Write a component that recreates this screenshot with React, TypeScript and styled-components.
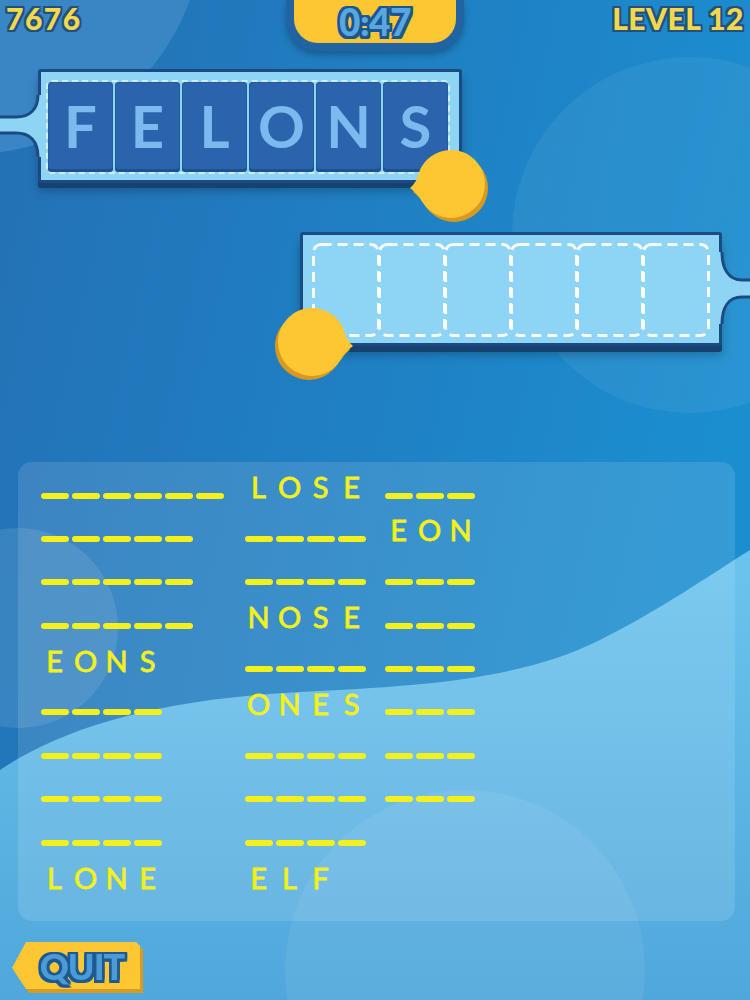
import React from 'react';
import styled, { createGlobalStyle } from 'styled-components';

const outline = (c: string, w: number) =>
  [
    `${w}px 0 0 ${c}`,
    `-${w}px 0 0 ${c}`,
    `0 ${w}px 0 ${c}`,
    `0 -${w}px 0 ${c}`,
    `${w}px ${w}px 0 ${c}`,
    `-${w}px ${w}px 0 ${c}`,
    `${w}px -${w}px 0 ${c}`,
    `-${w}px -${w}px 0 ${c}`,
  ].join(', ');

const GlobalStyle = createGlobalStyle`
  body {
    margin: 0;
    background: #1f7ec3;
  }
  * {
    box-sizing: border-box;
  }
`;

const Page = styled.div`
  position: relative;
  width: 750px;
  height: 1000px;
  overflow: hidden;
  font-family: Lato, 'DejaVu Sans', sans-serif;
`;

const Backdrop = styled.svg`
  position: absolute;
  inset: 0;
`;

const Content = styled.div`
  position: relative;
  display: flex;
  flex-direction: column;
`;

const Header = styled.div`
  display: grid;
  grid-template-columns: 1fr auto 1fr;
  align-items: start;
  height: 52px;
`;

const Stat = styled.div<{ $align: 'left' | 'right' }>`
  padding: 3px 6px 0;
  text-align: ${(p) => p.$align};
  font-size: 30px;
  line-height: 30px;
  font-weight: 900;
  letter-spacing: ${(p) => (p.$align === 'left' ? '1.5px' : '0.5px')};
  color: #f4d84b;
  text-shadow: ${outline('#22517f', 2)};
`;

const TimerPill = styled.div`
  width: 178px;
  height: 51px;
  border: 8px solid #2163a3;
  border-top: 0;
  border-radius: 0 0 32px 32px;
  background: #fdc733;
  display: flex;
  align-items: flex-start;
  justify-content: center;
  padding-top: 4px;
  box-shadow: 0 4px 6px rgba(0, 0, 0, 0.25);
`;

const TimerText = styled.span`
  display: block;
  font-size: 37px;
  line-height: 36px;
  font-weight: 900;
  letter-spacing: -0.5px;
  color: #5aa6de;
  text-shadow: ${outline('#1b5690', 2.5)};
`;

const TrayRow = styled.div<{ $indent: number; $gap: number }>`
  margin-top: ${(p) => p.$gap}px;
  padding-left: ${(p) => p.$indent}px;
`;

const Tray = styled.div<{ $width: number; $pad: string; $shadow: number }>`
  position: relative;
  width: ${(p) => p.$width}px;
  padding: ${(p) => p.$pad};
  background: #8ed4f4;
  border: 3px solid #1b4b82;
  border-radius: 3px;
  box-shadow: 0 ${(p) => p.$shadow}px 0 #17416f, 0 ${(p) => p.$shadow + 3}px 10px rgba(0, 0, 0, 0.25);
`;

const TileStrip = styled.div`
  display: flex;
  gap: 2px;
  outline: 2px dashed rgba(255, 255, 255, 0.6);
  border-radius: 4px;
`;

const Tile = styled.div`
  width: 65px;
  height: 90px;
  display: flex;
  align-items: center;
  justify-content: center;
  padding-bottom: 4px;
  background: #2b64ad;
  border-radius: 4px;
  box-shadow: inset 0 -3px 0 #1e5192, inset 0 0 0 1px #245aa0;
  font-size: 58px;
  font-weight: 700;
  color: #7cb9ef;
`;

const SlotStrip = styled.div`
  display: flex;
  height: 94px;
`;

const Slot = styled.svg`
  flex: none;

  & + & {
    margin-left: -2px;
  }
`;

const Handle = styled.svg<{ $side: 'left' | 'right'; $offset: number; $top: number }>`
  position: absolute;
  top: ${(p) => p.$top}px;
  ${(p) => p.$side}: ${(p) => p.$offset}px;
  overflow: visible;
`;

const Knob = styled.svg<{ $left: number; $top: number; $flip?: boolean }>`
  position: absolute;
  left: ${(p) => p.$left}px;
  top: ${(p) => p.$top}px;
  transform: ${(p) => (p.$flip ? 'scaleX(-1)' : 'none')};
  z-index: 2;
`;

const WordPanel = styled.div`
  margin: 116px 0 0 18px;
  width: 717px;
  height: 459px;
  padding: 10px 0 0 21px;
  background: rgba(255, 255, 255, 0.12);
  border-radius: 14px;
  display: grid;
  grid-template-columns: 204px 140px auto;
  grid-auto-rows: 43.4px;
`;

const Word = styled.div`
  display: flex;
  align-items: flex-start;
`;

const Cell = styled.span`
  display: flex;
  justify-content: center;
  width: 31px;
  height: 29px;
  font-size: 29px;
  line-height: 29px;
  font-weight: 400;
  color: #f4f01c;
  -webkit-text-stroke: 0.8px #f4f01c;
`;

const Dash = styled.span`
  width: 28px;
  height: 6px;
  margin-top: 20.5px;
  border-radius: 3px;
  background: #f4f01c;
`;

const QuitButton = styled.button`
  margin: 21px 0 0 12px;
  width: 128px;
  height: 47px;
  padding: 0;
  border: 0;
  background: transparent;
  filter: drop-shadow(3px 4px 0 #d69b1f);
  cursor: pointer;
`;

const TagFace = styled.div`
  width: 100%;
  height: 100%;
  display: flex;
  align-items: center;
  justify-content: center;
  padding-left: 12px;
  background: #fdc733;
  clip-path: polygon(14px 0, calc(100% - 4px) 0, 100% 4px, 100% 100%, 14px 100%, 0 55%);
  font-family: Lato, 'DejaVu Sans', sans-serif;
  font-size: 36px;
  font-weight: 900;
  letter-spacing: -1px;
  color: #4b9bd6;
  text-shadow: ${outline('#1d5993', 2.5)};
`;

type Entry = string | number | null;

const rows: Entry[][] = [
  [6, 'LOSE', 3],
  [5, 4, 'EON'],
  [5, 4, 3],
  [5, 'NOSE', 3],
  ['EONS', 4, 3],
  [4, 'ONES', 3],
  [4, 4, 3],
  [4, 4, 3],
  [4, 4, null],
  ['LONE', 'ELF', null],
];

const knobPath =
  'M3,40 Q10,34 12,24.4 A34,34 0 1 1 14.6,53 Q11,46 3,40 Z';

const KnobShape: React.FC<{ left: number; top: number; flip?: boolean }> = ({ left, top, flip }) => (
  <Knob $left={left} $top={top} $flip={flip} width="84" height="76" viewBox="0 0 84 76">
    <path d={knobPath} fill="#d9991f" transform="translate(3 4)" />
    <path d={knobPath} fill="#fdc733" />
  </Knob>
);

const WordCell: React.FC<{ entry: Entry }> = ({ entry }) => {
  if (entry === null) return <Word />;
  if (typeof entry === 'number') {
    return (
      <Word>
        {Array.from({ length: entry }).map((_, i) => (
          <Cell key={i}>
            <Dash />
          </Cell>
        ))}
      </Word>
    );
  }
  return (
    <Word>
      {entry.split('').map((ch, i) => (
        <Cell key={i}>{ch}</Cell>
      ))}
    </Word>
  );
};

export default function App() {
  return (
    <Page>
      <GlobalStyle />
      <Backdrop width="750" height="1000" viewBox="0 0 750 1000">
        <defs>
          <linearGradient id="base" x1="0" y1="0" x2="1" y2="0.3">
            <stop offset="0" stopColor="#2470b5" />
            <stop offset="1" stopColor="#1b8ecf" />
          </linearGradient>
          <linearGradient id="wave" x1="0" y1="0" x2="0" y2="1">
            <stop offset="0" stopColor="#6cc4ee" />
            <stop offset="1" stopColor="#4fa7db" />
          </linearGradient>
        </defs>
        <rect width="750" height="1000" fill="url(#base)" />
        <circle cx="-30" cy="-80" r="234" fill="#3a86c5" />
        <circle cx="690" cy="235" r="178" fill="#ffffff" opacity="0.06" />
        <circle cx="18" cy="628" r="100" fill="#ffffff" opacity="0.1" />
        <path
          d="M0,770 C60,730 150,700 300,692 C420,686 520,680 600,640 C660,610 710,575 750,550 L750,1000 L0,1000 Z"
          fill="url(#wave)"
        />
        <circle cx="465" cy="970" r="180" fill="#ffffff" opacity="0.07" />
      </Backdrop>

      <Content>
        <Header>
          <Stat $align="left">7676</Stat>
          <TimerPill>
            <TimerText>0:47</TimerText>
          </TimerPill>
          <Stat $align="right">LEVEL 12</Stat>
        </Header>

        <TrayRow $indent={38} $gap={17}>
          <Tray $width={424} $pad="10px 11px 8px 7px" $shadow={5}>
            <Handle $side="left" $offset={-41} $top={23} width="46" height="62" viewBox="0 0 46 62">
              <path
                d="M46,0 L38,0 C38,14 30,22 16,22 L0,22 L0,38 L16,38 C30,38 38,46 38,62 L46,62 Z"
                fill="#8ed4f4"
              />
              <path
                d="M38,0 C38,14 30,22 16,22 L0,22 M0,38 L16,38 C30,38 38,46 38,62"
                fill="none"
                stroke="#1b4b82"
                strokeWidth="3"
              />
            </Handle>
            <TileStrip>
              {'FELONS'.split('').map((ch, i) => (
                <Tile key={i}>{ch}</Tile>
              ))}
            </TileStrip>
            <KnobShape left={366} top={76} />
          </Tray>
        </TrayRow>

        <TrayRow $indent={300} $gap={49}>
          <Tray $width={422} $pad="8px 9px 6px 9px" $shadow={6}>
            <Handle $side="right" $offset={-31} $top={17} width="36" height="72" viewBox="0 0 36 72">
              <path
                d="M0,0 L8,0 C8,16 14,28 28,28 L36,28 L36,45 L28,45 C14,45 8,56 8,72 L0,72 Z"
                fill="#8ed4f4"
              />
              <path
                d="M8,0 C8,16 14,28 28,28 L36,28 M36,45 L28,45 C14,45 8,56 8,72"
                fill="none"
                stroke="#1b4b82"
                strokeWidth="3"
              />
            </Handle>
            <SlotStrip>
              {Array.from({ length: 6 }).map((_, i) => (
                <Slot key={i} width="68" height="94" viewBox="0 0 68 94">
                  <rect
                    x="1.5"
                    y="1.5"
                    width="65"
                    height="91"
                    rx="8"
                    fill="none"
                    stroke="#ffffff"
                    strokeOpacity="0.92"
                    strokeWidth="3"
                    strokeDasharray="10 6"
                  />
                </Slot>
              ))}
            </SlotStrip>
            <KnobShape left={-31} top={71} flip />
          </Tray>
        </TrayRow>

        <WordPanel>
          {rows.map((row, r) =>
            row.map((entry, c) => <WordCell key={`${r}-${c}`} entry={entry} />)
          )}
        </WordPanel>

        <div>
          <QuitButton>
            <TagFace>QUIT</TagFace>
          </QuitButton>
        </div>
      </Content>
    </Page>
  );
}
